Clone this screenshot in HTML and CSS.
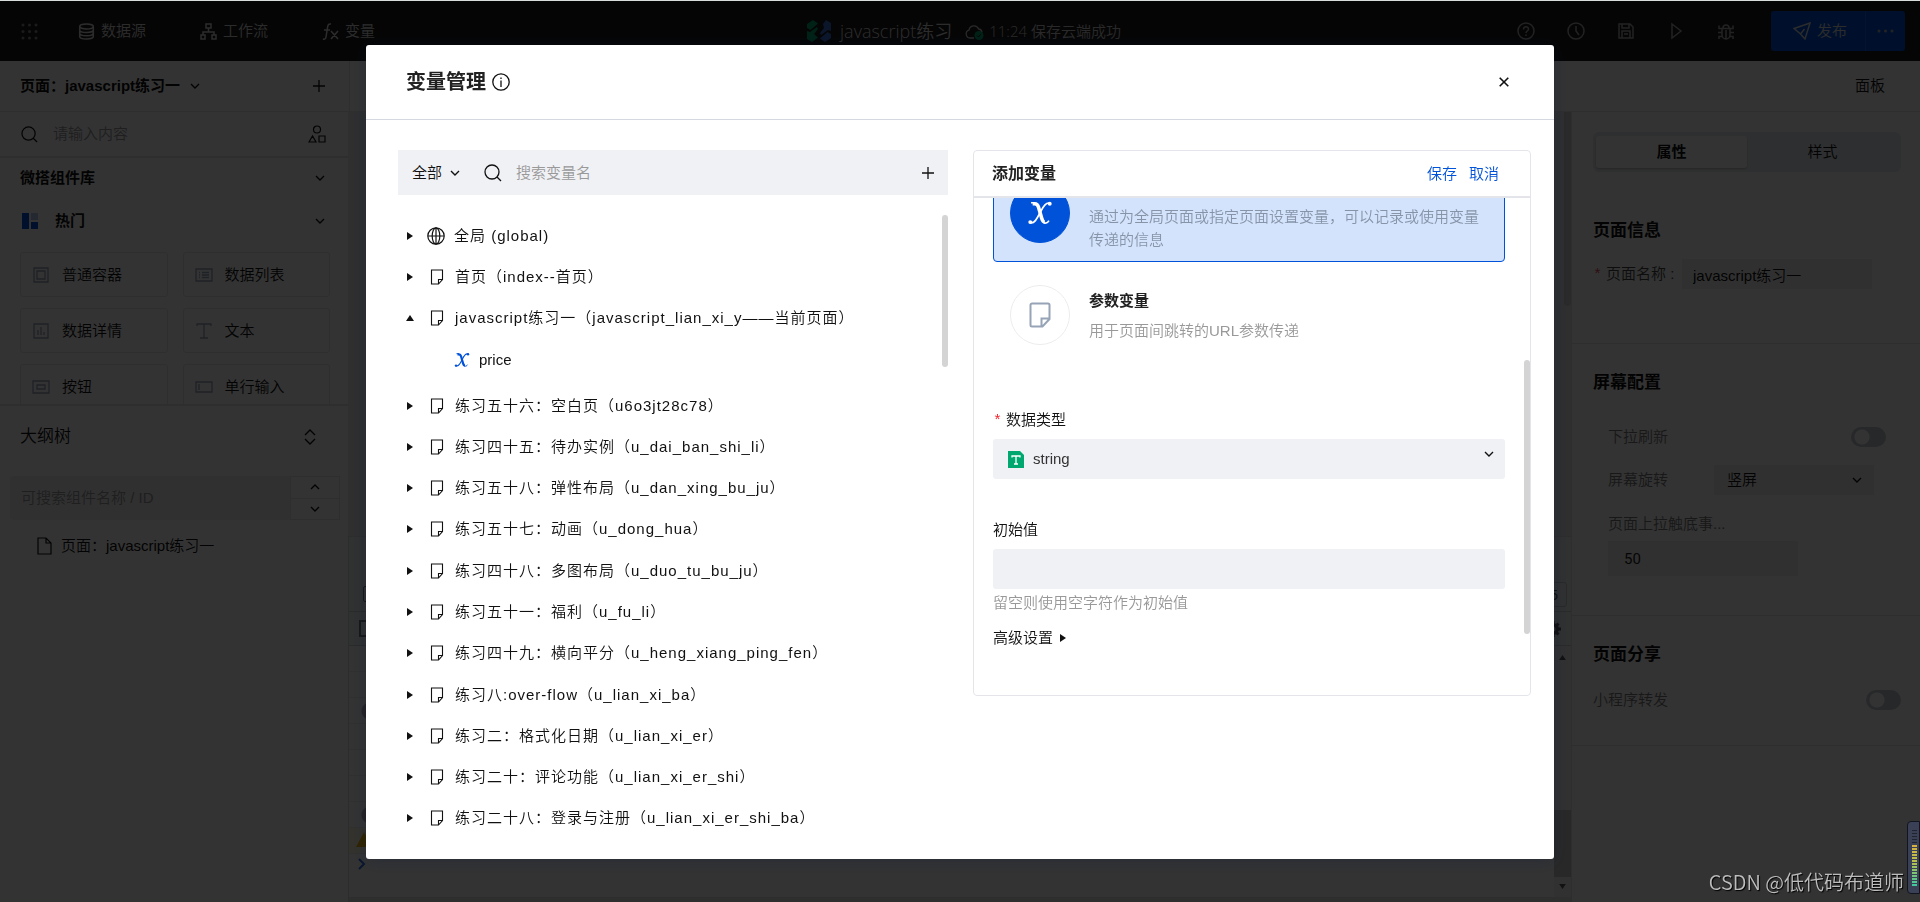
FILE: index.html
```html
<!DOCTYPE html>
<html lang="zh-CN">
<head>
<meta charset="utf-8">
<title>变量管理</title>
<link rel="stylesheet" href="styles.css">
</head>
<body>
<svg class="sprite" aria-hidden="true">
  <symbol id="chev" viewBox="0 0 12 12"><path d="M2 4l4 4 4-4" fill="none" stroke="currentColor" stroke-width="1.4"/></symbol>
  <symbol id="chev-up" viewBox="0 0 12 12"><path d="M2 8l4-4 4 4" fill="none" stroke="currentColor" stroke-width="1.4"/></symbol>
  <symbol id="plus" viewBox="0 0 12 12"><path d="M6 0v12M0 6h12" fill="none" stroke="currentColor" stroke-width="1.3"/></symbol>
  <symbol id="search" viewBox="0 0 18 18"><circle cx="8" cy="8" r="7" fill="none" stroke="currentColor" stroke-width="1.3"/><path d="M13 13l4 4" stroke="currentColor" stroke-width="1.3"/></symbol>
  <symbol id="right" viewBox="0 0 6 8"><path d="M0 0l6 4-6 4z" fill="currentColor"/></symbol>
  <symbol id="up" viewBox="0 0 8 6"><path d="M0 6l4-6 4 6z" fill="currentColor"/></symbol>
  <symbol id="note" viewBox="0 0 14 16"><path d="M1.500 1h11v9.500L8.500 15h-7zM12.500 10.500h-4V15" fill="none" stroke="currentColor" stroke-width="1.1"/></symbol>
  <symbol id="ital" viewBox="0 0 16 16"><path d="M3.500 2.300h1.300c1.500 0 1.900.8 2.300 2.200l1.900 6.600c.5 1.700 1 2.500 2 2.500" fill="none" stroke="currentColor" stroke-width="2.200"/><path d="M2.500 1.700h2.500M10.500 14c1.300.5 2.300 0 3-1.300" fill="none" stroke="currentColor" stroke-width="1"/><path d="M14.500 2.300C12 .8 10 3.800 8.200 7.400S4.500 15.200 1.500 13.700" fill="none" stroke="currentColor" stroke-width="1.100"/><circle cx="14" cy="2.300" r="1.200" fill="currentColor"/><circle cx="2" cy="13.600" r="1.200" fill="currentColor"/></symbol>
</svg>

<div class="app">
  <header class="topbar">
    <nav class="topbar-nav">
      <svg class="i17" viewBox="0 0 17 17" fill="currentColor"><circle cx="2" cy="2" r="1.5"/><circle cx="8.500" cy="2" r="1.5"/><circle cx="15" cy="2" r="1.5"/><circle cx="2" cy="8.500" r="1.5"/><circle cx="8.500" cy="8.500" r="1.5"/><circle cx="15" cy="8.500" r="1.5"/><circle cx="2" cy="15" r="1.5"/><circle cx="8.500" cy="15" r="1.5"/><circle cx="15" cy="15" r="1.5"/></svg>
      <a class="nav-item" href="#"><svg class="i17" viewBox="0 0 17 17" fill="none" stroke="currentColor" stroke-width="1.5"><ellipse cx="8.500" cy="3.500" rx="6.800" ry="2.500"/><path d="M1.700 3.500v10c0 1.500 3 2.500 6.800 2.500s6.800-1 6.800-2.500v-10M1.700 7c0 1.500 3 2.500 6.800 2.500s6.800-1 6.800-2.500M1.700 10.300c0 1.500 3 2.500 6.800 2.500s6.800-1 6.800-2.500"/></svg>数据源</a>
      <a class="nav-item" href="#"><svg class="i17" viewBox="0 0 17 17" fill="none" stroke="currentColor" stroke-width="1.5"><rect x="6" y="1" width="5" height="4"/><rect x="1" y="12" width="4" height="4"/><rect x="12" y="12" width="4" height="4"/><path d="M8.500 5v4M3 12V9h11v3"/></svg>工作流</a>
      <a class="nav-item" href="#"><svg class="i17" viewBox="0 0 17 17" fill="none" stroke="currentColor" stroke-width="1.5"><path d="M9 1c-2-.5-3 .5-3.400 3L4 14c-.3 2-1.500 2.500-3 2M2 7h6M9 8l7 8M16 8l-7 8"/></svg>变量</a>
    </nav>
    <div class="project">
      <svg class="logo" viewBox="0 0 24 22"><path d="M0 4l6-4 5 3.500L3.500 10 0 8zM0 11l3 1 7-5 1 2-4 5 4 3.500L5 22l-5-3z" fill="#00a870"/><path d="M24 18l-6 4-5-3.500L20.500 12l3.500 2zM24 11l-3-1-7 5-1-2 4-5-1-4L19 0l5 3z" fill="#3a6fd8"/></svg>
      <span class="project-name">javascript练习</span>
      <svg class="cloud" viewBox="0 0 19 17"><path d="M9 15H5a4 4 0 0 1-1-7.800A5 5 0 0 1 13.600 6 4 4 0 0 1 17 9" fill="none" stroke="#ccc" stroke-width="1.300"/><circle cx="14" cy="12.500" r="4.500" fill="#00a870"/><path d="M12 12.500l1.500 1.500 2.500-3" fill="none" stroke="#1a1a1a"/></svg>
      <span class="saved">11:24 保存云端成功</span>
    </div>
    <div class="tools">
      <svg class="i18" viewBox="0 0 18 18" fill="none" stroke="currentColor" stroke-width="1.500"><circle cx="9" cy="9" r="8"/><path d="M6.500 7.500C6.500 4 11.500 4 11.500 7c0 2-2.500 2-2.500 4M9 12.500v1.500"/></svg>
      <svg class="i18" viewBox="0 0 18 18" fill="none" stroke="currentColor" stroke-width="1.500"><circle cx="9" cy="9" r="8"/><path d="M9 4v5l3 4"/></svg>
      <svg class="i18" viewBox="0 0 18 18" fill="none" stroke="currentColor" stroke-width="1.500"><path d="M2 2h11l3 3v11H2zM5 2v4h7V2M5 16V9h8v7M7 12h4"/></svg>
      <svg class="i18" viewBox="0 0 18 18" fill="none" stroke="currentColor" stroke-width="1.500"><path d="M5 2l9 7-9 7z"/></svg>
      <svg class="i18" viewBox="0 0 18 18" fill="none" stroke="currentColor" stroke-width="1.500"><path d="M5 6.500h8V13a4 4 0 0 1-8 0zM6 6a3 3 0 0 1 6 0M9 8v9M1 10.500h4M13 10.500h4M2 3.500v3h3M16 3.500v3h-3M2 17v-2.500h3M16 17v-2.500h-3"/></svg>
      <div class="publish">
        <button class="publish-main" type="button"><svg class="i18" viewBox="0 0 18 18" fill="none" stroke="currentColor" stroke-width="1.400"><path d="M1 6.500L17 1l-5 16-4.500-5zM7.500 12l4-5"/></svg>发布</button>
        <button class="publish-more" type="button" aria-label="更多"><svg class="dots" viewBox="0 0 17 4" fill="currentColor"><circle cx="2" cy="2" r="1.500"/><circle cx="8.500" cy="2" r="1.500"/><circle cx="15" cy="2" r="1.500"/></svg></button>
      </div>
    </div>
  </header>

  <div class="subbar">
    <div class="subbar-left">
      <strong>页面：javascript练习一</strong>
      <svg class="i12"><use href="#chev"/></svg>
      <svg class="i12 push"><use href="#plus"/></svg>
    </div>
    <span class="subbar-right">面板</span>
  </div>

  <div class="work">
    <aside class="left">
      <div class="lib-search">
        <svg class="i17"><use href="#search"/></svg>
        <input class="plain" type="text" placeholder="请输入内容" aria-label="搜索组件">
        <svg class="i18" viewBox="0 0 18 18" fill="none" stroke="currentColor" stroke-width="1.200"><circle cx="9" cy="4.500" r="3.500"/><path d="M1 17l3.500-6L8 17zM11 11h6v6h-6z"/></svg>
      </div>
      <section class="lib">
        <h3 class="lib-title">微搭组件库<svg class="i12"><use href="#chev"/></svg></h3>
        <h3 class="lib-group"><svg class="i16" viewBox="0 0 16 16"><path d="M0 0h7v16H0zM9 9h7v7H9z" fill="#0052d9"/><path d="M9 0h7v7H9z" fill="#b5c7f0"/></svg><span>热门</span><svg class="i12"><use href="#chev"/></svg></h3>
        <div class="lib-grid">
          <div class="comp"><svg class="ic" viewBox="0 0 18 16"><path d="M2 1h14v14H2zM5 4h8v8H5z"/></svg>普通容器</div>
          <div class="comp"><svg class="ic" viewBox="0 0 18 16"><path d="M1 2h16v12H1zM4 5.500h1M7 5.500h7M4 8h1M7 8h7M4 10.500h1M7 10.500h7"/></svg>数据列表</div>
          <div class="comp"><svg class="ic" viewBox="0 0 18 16"><path d="M2 1h14v14H2zM6 7v5M9 4v8M12 9v3"/></svg>数据详情</div>
          <div class="comp"><svg class="ic" viewBox="0 0 18 16"><path d="M2 3V1h14v2M9 1v14M5 15h8"/></svg>文本</div>
          <div class="comp"><svg class="ic" viewBox="0 0 18 16"><path d="M1 2h16v12H1zM5 6h8v4H5z"/></svg>按钮</div>
          <div class="comp"><svg class="ic" viewBox="0 0 18 16"><path d="M1 3h16v10H1zM4 5v6"/></svg>单行输入</div>
        </div>
      </section>
      <section class="outline">
        <h3 class="outline-title">大纲树<svg class="sorter" viewBox="0 0 12 16" fill="none" stroke="currentColor" stroke-width="1.400"><path d="M1 6l5-5 5 5M1 10l5 5 5-5"/></svg></h3>
        <div class="outline-search">
          <input type="text" placeholder="可搜索组件名称 / ID" aria-label="搜索大纲">
          <div class="stepper">
            <button type="button" aria-label="上一个"><svg class="i12"><use href="#chev-up"/></svg></button>
            <button type="button" aria-label="下一个"><svg class="i12"><use href="#chev"/></svg></button>
          </div>
        </div>
        <div class="outline-item"><svg class="file" viewBox="0 0 15 18" fill="none" stroke="currentColor" stroke-width="1.200"><path d="M1 1h8l5 5v11H1zM9 1v5h5"/></svg>页面：javascript练习一</div>
      </section>
    </aside>

    <main class="canvas">
      <div class="stage"><span class="stage-bar"></span></div>
      <div class="devtools">
        <div class="dev-row dev-tall"><span class="dev-box"></span><span class="dev-count">5</span></div>
        <div class="dev-row"><span class="dev-dock"></span><svg class="gear" viewBox="0 0 16 16"><circle cx="8" cy="8" r="4.500" fill="none" stroke="#555" stroke-width="3"/><path d="M8 0v16M0 8h16M2.500 2.500l11 11M13.500 2.500l-11 11" stroke="#555" stroke-width="3"/><circle cx="8" cy="8" r="2.500" fill="#eef2f2"/></svg></div>
        <div class="console">
          <div class="lines">
            <div class="line"></div><div class="line"></div><div class="line mark"></div><div class="line"></div><div class="line"></div><div class="line"></div><div class="line mark"></div>
            <div class="line warn"><svg class="i16" viewBox="0 0 16 16"><path d="M8 0l8 15H0z" fill="#f5b400"/></svg></div>
            <div class="line prompt"><svg class="i12" viewBox="0 0 12 12"><path d="M3 1l5 5-5 5" fill="none" stroke="#2f6fe0" stroke-width="2"/></svg></div>
          </div>
          <div class="rail"><svg class="i8"><use href="#up"/></svg><span class="rail-thumb"></span><svg class="i8 flip"><use href="#up"/></svg></div>
        </div>
      </div>
    </main>

    <aside class="right">
      <section class="block first">
        <div class="tabs"><button class="tab active" type="button">属性</button><button class="tab" type="button">样式</button></div>
        <h2>页面信息</h2>
        <div class="field"><label for="pname"><i>*</i>页面名称&nbsp;:</label><input id="pname" type="text" value="javascript练习一"></div>
      </section>
      <section class="block screen">
        <h2>屏幕配置</h2>
        <div class="field indent spread"><label for="pull">下拉刷新</label><input class="switch" id="pull" type="checkbox"></div>
        <div class="field indent"><label class="wide" for="rotate">屏幕旋转</label><span class="picker"><select id="rotate"><option>竖屏</option></select><svg class="i12"><use href="#chev"/></svg></span></div>
        <div class="indent stack"><label for="reach">页面上拉触底事...</label><input id="reach" type="text" value="50"></div>
      </section>
      <section class="block share">
        <h2>页面分享</h2>
        <div class="field spread"><label for="fwd">小程序转发</label><input class="switch" id="fwd" type="checkbox"></div>
      </section>
    </aside>
  </div>
</div>

<div class="overlay">
  <div class="modal" role="dialog" aria-modal="true" aria-labelledby="dlg">
    <header class="modal-head">
      <h1 id="dlg">变量管理</h1>
      <svg class="i18" viewBox="0 0 18 18" fill="none" stroke="currentColor" stroke-width="1.300"><circle cx="9" cy="9" r="8.200"/><path d="M9 7.500V14M9 4.500V6"/></svg>
      <button class="close" type="button" aria-label="关闭"><svg class="i10" viewBox="0 0 10 10"><path d="M.7.7l8.600 8.600M9.300.7L.7 9.300" stroke="currentColor" stroke-width="1.600"/></svg></button>
    </header>
    <div class="modal-body">
      <section class="vars">
        <div class="var-search">
          <button class="scope" type="button">全部<svg class="i12"><use href="#chev"/></svg></button>
          <svg class="i18"><use href="#search"/></svg>
          <input class="plain" type="text" placeholder="搜索变量名" aria-label="搜索变量名">
          <svg class="i12"><use href="#plus"/></svg>
        </div>
        <div class="tree-wrap">
          <ul class="tree">
            <li><svg class="arrow"><use href="#right"/></svg><svg class="globe" viewBox="0 0 18 18" fill="none" stroke="currentColor" stroke-width="1.200"><circle cx="9" cy="9" r="8.200"/><ellipse cx="9" cy="9" rx="3.800" ry="8.200"/><path d="M1 9h16M9 1v16"/></svg>全局 (global)</li>
            <li><svg class="arrow"><use href="#right"/></svg><svg class="note"><use href="#note"/></svg>首页（index--首页）</li>
            <li><svg class="arrow"><use href="#up"/></svg><svg class="note"><use href="#note"/></svg>javascript练习一（javascript_lian_xi_y——当前页面）</li>
            <li class="leaf"><svg class="x"><use href="#ital"/></svg>price</li>
            <li><svg class="arrow"><use href="#right"/></svg><svg class="note"><use href="#note"/></svg>练习五十六：空白页（u6o3jt28c78）</li>
            <li><svg class="arrow"><use href="#right"/></svg><svg class="note"><use href="#note"/></svg>练习四十五：待办实例（u_dai_ban_shi_li）</li>
            <li><svg class="arrow"><use href="#right"/></svg><svg class="note"><use href="#note"/></svg>练习五十八：弹性布局（u_dan_xing_bu_ju）</li>
            <li><svg class="arrow"><use href="#right"/></svg><svg class="note"><use href="#note"/></svg>练习五十七：动画（u_dong_hua）</li>
            <li><svg class="arrow"><use href="#right"/></svg><svg class="note"><use href="#note"/></svg>练习四十八：多图布局（u_duo_tu_bu_ju）</li>
            <li><svg class="arrow"><use href="#right"/></svg><svg class="note"><use href="#note"/></svg>练习五十一：福利（u_fu_li）</li>
            <li><svg class="arrow"><use href="#right"/></svg><svg class="note"><use href="#note"/></svg>练习四十九：横向平分（u_heng_xiang_ping_fen）</li>
            <li><svg class="arrow"><use href="#right"/></svg><svg class="note"><use href="#note"/></svg>练习八:over-flow（u_lian_xi_ba）</li>
            <li><svg class="arrow"><use href="#right"/></svg><svg class="note"><use href="#note"/></svg>练习二：格式化日期（u_lian_xi_er）</li>
            <li><svg class="arrow"><use href="#right"/></svg><svg class="note"><use href="#note"/></svg>练习二十：评论功能（u_lian_xi_er_shi）</li>
            <li><svg class="arrow"><use href="#right"/></svg><svg class="note"><use href="#note"/></svg>练习二十八：登录与注册（u_lian_xi_er_shi_ba）</li>
          </ul>
          <span class="bar tree-bar"></span>
        </div>
      </section>

      <section class="editor">
        <header class="editor-head"><h2>添加变量</h2><a href="#">保存</a><a href="#">取消</a></header>
        <div class="editor-main">
          <form class="form">
            <div class="kind selected">
              <span class="kind-icon"><svg class="x-big"><use href="#ital"/></svg></span>
              <p class="kind-end">通过为全局页面或指定页面设置变量，可以记录或使用变量传递的信息</p>
            </div>
            <div class="kind">
              <span class="kind-icon"><svg class="note-big" viewBox="0 0 22 26"><path d="M3 1.500h16a1.500 1.500 0 0 1 1.500 1.500v14l-7 7.500H3A1.500 1.500 0 0 1 1.500 23V3A1.500 1.500 0 0 1 3 1.500zM20.500 16.500h-8v8" fill="none" stroke="#97a3b7" stroke-width="2"/></svg></span>
              <div><h3>参数变量</h3><p>用于页面间跳转的URL参数传递</p></div>
            </div>
            <label class="lab type-lab" for="dtype"><i>*</i>数据类型</label>
            <div class="type">
              <svg class="tico" viewBox="0 0 16 17"><path d="M0 0h12l4 4v13H0z" fill="#00a870"/><path d="M4 6.500V5h8v1.500M8 5v8M6 13h4" fill="none" stroke="#fff" stroke-width="1.300"/></svg>
              <select id="dtype"><option>string</option></select>
              <svg class="i12"><use href="#chev"/></svg>
            </div>
            <label class="lab init-lab" for="init">初始值</label>
            <input class="init" id="init" type="text">
            <p class="help">留空则使用空字符作为初始值</p>
            <button class="adv" type="button">高级设置<svg class="arrow"><use href="#right"/></svg></button>
          </form>
          <span class="bar form-bar"></span>
        </div>
      </section>
    </div>
  </div>
</div>

<div class="watermark">CSDN @低代码布道师</div>
<div class="meter" aria-hidden="true"><span class="meter-off"></span><span class="meter-on"></span></div>
</body>
</html>
```
FILE: styles.css
```css
* { box-sizing: border-box; }
body {
  margin: 0;
  font: 350 15px/24px "Liberation Sans", "Noto Sans CJK SC", sans-serif;
  color: #111;
  background: #fff;
  overflow: hidden;
}
h1, h2, h3, p, ul { margin: 0; padding: 0; }
svg { display: block; flex: none; }
button, input, select { font: inherit; color: inherit; border: 0; background: none; padding: 0; margin: 0; min-width: 0; border-radius: 0; }
select { appearance: none; }
input::placeholder { color: #999; opacity: 1; }
strong { font-weight: 700; }
a { color: inherit; text-decoration: none; }
i { font-style: normal; font-family: "Liberation Mono", monospace; line-height: 1; color: #e34d59; }
.sprite { position: absolute; width: 0; height: 0; }
.i8 { width: 9px; height: 5px; }
.i10 { width: 10px; height: 10px; }
.i12 { width: 12px; height: 12px; }
.i16 { width: 16px; height: 16px; }
.i17 { width: 17px; height: 17px; }
.i18 { width: 18px; height: 18px; }
.push { margin-left: auto; }
.plain { flex: 1; }

/* Application shell */
.app { height: 100vh; display: flex; flex-direction: column; border-top: 1px solid #d9dedc; }
.topbar { height: 60px; flex: none; background: #1a1a1a; color: #fff; display: grid; grid-template-columns: 1fr auto 1fr; align-items: center; padding: 0 15px 0 21px; }
.topbar-nav { display: flex; align-items: center; color: #ddd; }
.nav-item { display: flex; align-items: center; gap: 6px; margin-right: 54px; }
.topbar-nav > .i17 { margin-right: 40px; color: #888; }
.project { display: flex; align-items: center; gap: 9px; padding-left: 2px; }
.project-name { font-family: "Open Sans", "Noto Sans CJK SC", sans-serif; font-size: 18px; color: #ddd; }
.saved { font-family: "Open Sans", "Noto Sans CJK SC", sans-serif; color: #ccc; margin-left: -4px; }
.logo { width: 24px; height: 22px; }
.cloud { width: 19px; height: 17px; margin-left: 4px; }
.tools { display: flex; align-items: center; justify-content: flex-end; gap: 32px; color: #aaa; }
.publish { display: flex; height: 40px; margin-left: 4px; background: #0052d9; border-radius: 3px; color: #ddd; }
.publish-main { width: 95px; display: flex; align-items: center; justify-content: center; gap: 6px; padding-left: 4px; border-right: 1px solid #1a63dc; }
.publish-more { width: 39px; display: flex; align-items: center; justify-content: center; color: #aaa; }
.dots { width: 17px; height: 4px; }
.subbar { height: 51px; flex: none; display: flex; border-bottom: 1px solid #e7e7e7; }
.subbar-left { width: 350px; border-right: 1px solid #e7e7e7; display: flex; align-items: center; gap: 9px; padding: 0 24px 0 20px; }
.subbar-right { margin: auto 35px auto auto; }
.work { flex: 1; min-height: 0; display: flex; }

/* Component library and outline */
.left { width: 348px; flex: none; display: flex; flex-direction: column; }
.lib-search { height: 46px; flex: none; display: flex; align-items: center; gap: 15px; padding: 0 22px 0 21px; border-bottom: 2px solid #e7e7e7; }
.lib { height: 248px; flex: none; overflow: hidden; border-bottom: 2px solid #e7e7e7; padding: 0 18px 0 20px; }
.lib-title, .lib-group { font-size: 15px; font-weight: 700; display: flex; align-items: center; justify-content: space-between; padding-right: 4px; }
.lib-title { height: 40px; }
.lib-group { height: 46px; padding-left: 2px; gap: 17px; }
.lib-group span { flex: 1; }
.lib-grid { display: grid; grid-template-columns: 1fr 1fr; gap: 11px 15px; padding-top: 8px; }
.comp { height: 45px; border: 1px solid #e5e5e5; border-radius: 3px; display: flex; align-items: center; gap: 12px; padding-left: 11px; }
.ic { width: 18px; height: 16px; fill: none; stroke: #97a3b7; stroke-width: 1.3; }
.outline-title { height: 62px; font-size: 17px; font-weight: 350; display: flex; align-items: center; justify-content: space-between; padding: 0 32px 0 20px; }
.sorter { width: 12px; height: 16px; }
.outline-search { display: flex; height: 44px; margin: 8px 8px 0 10px; }
.outline-search input { flex: 1; background: #f0f1f1; padding-left: 11px; border-radius: 3px 0 0 3px; }
.stepper { width: 50px; display: grid; border: 1px solid #e3e3e3; }
.stepper button { display: grid; place-items: center; }
.stepper button + button { border-top: 1px solid #e3e3e3; }
.outline-item { display: flex; align-items: center; gap: 9px; padding: 14px 0 0 37px; }
.file { width: 15px; height: 18px; }

/* Canvas and console */
.canvas { flex: 1; min-width: 0; display: flex; flex-direction: column; border-right: 1px solid #e3e3e3; }
.stage { flex: 1; background: #e9ebee; display: flex; justify-content: flex-end; }
.stage-bar { width: 7px; height: 194px; background: #d2d2d2; border-radius: 0 0 4px 4px; }
.devtools { height: 366px; flex: none; display: flex; flex-direction: column; border-top: 1px solid #ddd; border-left: 1px solid #ddd; }
.dev-row { height: 34px; flex: none; display: flex; justify-content: space-between; align-items: center; padding: 0 10px; background: #eef2f2; border-bottom: 1px solid #ccd2d2; }
.dev-tall { height: 75px; padding: 40px 4px 0 14px; }
.dev-box { width: 14px; height: 16px; border: 1px solid #777; border-radius: 2px; }
.dev-count { height: 25px; border: 1px solid #c5cccc; border-radius: 3px; padding: 0 8px; color: #555; }
.dev-dock { width: 16px; height: 17px; border: 2px solid #777; }
.gear { width: 16px; height: 16px; }
.console { flex: 1; display: flex; border-bottom: 5px solid #e4e4e4; min-height: 0; }
.lines { flex: 1; }
.line { height: 26px; border-bottom: 1px solid #eee; padding: 4px 7px; }
.warn { background: #fff8e1; }
.prompt { border: 0; }
.mark { background: radial-gradient(circle at 21px 13px, #b9aabb 8px, transparent 9px); }
.rail { width: 17px; background: #f4f4f4; display: flex; flex-direction: column; align-items: center; padding: 9px 0 8px; color: #555; }
.rail-thumb { width: 17px; height: 67px; background: #c8c8c8; margin: auto 0 7px; }
.flip { transform: rotate(180deg); }

/* Properties */
.right { width: 348px; flex: none; }
.block { border-bottom: 1px solid #e3e3e3; padding: 0 19px 0 21px; }
.block h2 { font-size: 17px; line-height: 24px; }
.first { height: 232px; padding-top: 20px; }
.tabs { display: flex; height: 40px; background: #e6eaef; border-radius: 6px; padding: 4px 3px; margin-bottom: 47px; }
.tab { flex: 1; }
.tab.active { background: #fff; font-weight: 700; border-radius: 3px; box-shadow: 0 1px 2px #bbb; }
.field { display: flex; align-items: center; }
.first .field { margin-top: 16px; }
.field label { color: #777; }
.first label { color: #444; width: 89px; }
.first label i { margin-right: 4px; }
.first .field input { width: 190px; height: 30px; background: #f1f1f1; padding: 0 11px; }
.screen { height: 272px; padding-top: 27px; }
.screen h2 { margin-bottom: 30px; }
.indent { margin-left: 15px; }
.spread { justify-content: space-between; }
.screen .spread { height: 24px; margin-right: 15px; margin-bottom: 16px; }
.wide { width: 106px; }
.switch { appearance: none; width: 35px; height: 20px; border-radius: 10px; background: radial-gradient(circle at 11px 10px, #fff 7px, #c3c8d2 8px); }
.picker { display: flex; align-items: center; width: 160px; height: 30px; background: #f1f1f1; padding: 0 11px 0 13px; }
.picker select { flex: 1; }
.stack { display: grid; justify-items: start; gap: 5px; margin-top: 17px; color: #777; }
.stack input { width: 190px; height: 35px; background: #f1f1f1; padding-left: 16px; color: #222; font-family: Roboto, sans-serif; font-weight: 400; }
.share { height: 130px; padding-top: 27px; }
.share .field { margin-top: 21px; }

/* Dialog */
.overlay { position: fixed; inset: 1px 0 0; background: rgba(0, 0, 0, .8); display: flex; justify-content: center; align-items: flex-start; padding-top: 44px; }
.modal { width: 1188px; max-width: 100%; height: calc(100vh - 88px); background: #fff; border-radius: 3px; display: flex; flex-direction: column; box-shadow: 0 2px 16px rgba(10, 25, 60, .3); }
.modal-head { height: 75px; flex: none; border-bottom: 1px solid #d5d8e1; display: flex; align-items: center; gap: 6px; padding: 0 44px 0 40px; }
.modal-head h1 { font-size: 20px; line-height: 28px; font-weight: 700; color: #222; }
.close { margin-left: auto; width: 12px; height: 12px; display: grid; place-items: center; }
.modal-body { flex: 1; min-height: 0; display: grid; grid-template-columns: 550fr 558fr; gap: 25px; padding: 30px 23px 20px 32px; }
.vars { display: flex; flex-direction: column; min-height: 0; }
.var-search { height: 45px; flex: none; background: #f0f1f5; display: flex; align-items: center; padding: 0 14px; }
.scope { display: flex; align-items: center; gap: 7px; margin-right: 23px; }
.var-search .plain { margin-left: 14px; }
.tree-wrap { flex: 1; display: flex; margin-top: 20px; min-height: 0; }
.tree { flex: 1; list-style: none; display: flex; flex-direction: column; justify-content: space-between; letter-spacing: 1px; }
.tree li { height: 41px; display: flex; align-items: center; white-space: nowrap; padding-left: 8px; }
.tree .leaf { height: 46px; padding: 0 0 3px 56px; gap: 9px; letter-spacing: 0; }
.arrow { width: 8px; height: 8px; }
.note { width: 14px; height: 16px; margin: 0 11px 0 16px; }
.globe { width: 18px; height: 18px; margin: 0 9px 0 13px; }
.x { width: 16px; height: 16px; color: #0052d9; }
.bar { width: 6px; border-radius: 3px; background: #d4d4d4; flex: none; }
.tree-bar { height: 152px; }

/* Variable editor */
.editor { align-self: start; border: 1px solid #e3e5ea; border-radius: 4px; }
.editor-head { height: 47px; border-bottom: 2px solid #e3e5ea; display: flex; align-items: center; gap: 12px; padding: 0 31px 0 18px; color: #0052d9; }
.editor-head h2 { font-size: 16px; font-weight: 700; color: #222; margin-right: auto; }
.editor-main { display: flex; height: 497px; }
.form { flex: 1; min-width: 0; overflow: hidden; display: flex; flex-direction: column; justify-content: flex-end; padding: 0 19px 45px 19px; }
.form > * { flex: none; }
.kind { height: 98px; display: flex; align-items: center; gap: 19px; padding: 0 16px; border: 1px solid transparent; border-radius: 4px; color: #999; line-height: 23px; }
.kind.selected { background: #d4e3fc; border-color: #0052d9; color: #8794a8; margin-bottom: 4px; }
.kind h3 { font-size: 15px; font-weight: 700; color: #222; margin-bottom: 7px; }
.kind-end { align-self: flex-end; padding-bottom: 10px; }
.kind-icon { width: 60px; height: 60px; flex: none; border-radius: 50%; border: 1px solid #ececec; display: grid; place-items: center; }
.selected .kind-icon { background: #0052d9; border-color: #0052d9; color: #fff; }
.x-big { width: 26px; height: 26px; }
.note-big { width: 22px; height: 26px; }
.lab { line-height: 24px; }
.type-lab { height: 24px; margin-top: 44px; }
.lab i { margin-right: 4px; color: #f5222d; }
.type, .init { height: 40px; background: #f0f1f5; border-radius: 3px; }
.type { display: flex; align-items: center; gap: 9px; margin-top: 7px; padding: 0 10px 0 15px; }
.type select { flex: 1; height: 40px; color: #333; }
.type .i12 { margin-bottom: 10px; }
.tico { width: 16px; height: 17px; }
.init-lab { margin-top: 39px; }
.init { margin-top: 7px; padding: 0 12px; }
.help { margin-top: 2px; color: #999; }
.adv { display: flex; align-items: center; gap: 6px; margin-top: 11px; align-self: flex-start; line-height: 24px; }
.form-bar { height: 274px; margin-top: 162px; }

/* Desktop layers above the page */
.watermark { position: fixed; right: 16px; bottom: 6px; font-family: "Noto Sans CJK SC", sans-serif; font-size: 20px; line-height: 28px; color: #bdbdbd; text-shadow: 1px 1px 1px #000; }
.meter { position: fixed; right: 0; bottom: 8px; width: 13px; height: 73px; background: #3a4056; border: 1px solid #12151f; border-radius: 4px 0 0 4px; padding: 8px 2px 7px 4px; display: flex; flex-direction: column; }
.meter-off { height: 15px; background: repeating-linear-gradient(#20242f 0 1px, #3a4056 1px 3px); }
.meter-on { flex: 1; background: repeating-linear-gradient(transparent 0 2px, #3a4056 2px 3px), linear-gradient(#d8b13c, #b9c04a 40%, #3cc9a0); }
```
